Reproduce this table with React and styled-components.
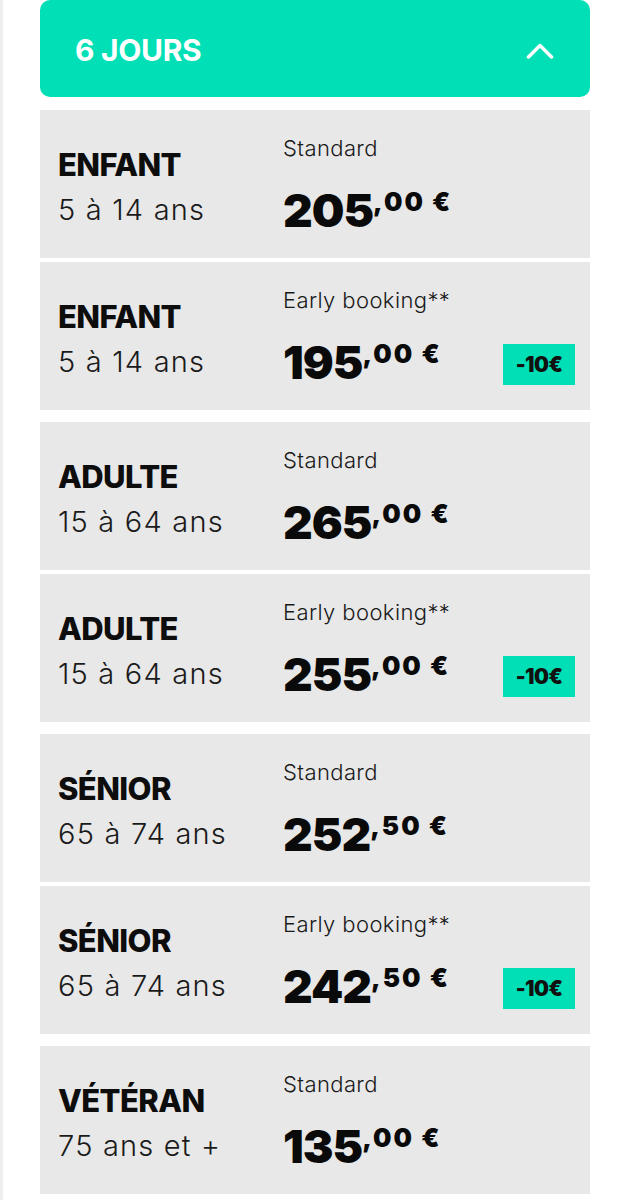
import React from "react";
import styled, { createGlobalStyle } from "styled-components";

const Global = createGlobalStyle`
  html, body { margin: 0; padding: 0; background: #ffffff; }
  body { font-family: Inter, "Liberation Sans", sans-serif; color: #111; }
`;

const Page = styled.div`
  min-height: 1200px;
  box-sizing: border-box;
  border-left: 3px solid #eeeeee;
  padding: 0 41px 6px 37px;
  border-bottom: 6px solid #f2f3f5;
  display: flex;
  flex-direction: column;
`;

const Header = styled.div`
  height: 97px;
  background: #00dfb5;
  border-radius: 10px;
  display: flex;
  align-items: center;
  justify-content: space-between;
  padding: 3px 36px 0 35px;
  box-sizing: border-box;
  margin-bottom: 13px;
`;

const Title = styled.h2`
  margin: 0;
  color: #ffffff;
  font-size: 30px;
  font-weight: 700;
  letter-spacing: -0.3px;
`;

const Chevron = styled.svg`
  width: 28px;
  height: 17px;
  display: block;
`;

const Group = styled.div`
  display: flex;
  flex-direction: column;
  gap: 4px;
  margin-bottom: 12px;
`;

const Card = styled.div`
  height: 148px;
  background: #e8e8e8;
  display: flex;
  box-sizing: border-box;
  padding: 0 15px 0 18px;
`;

const Who = styled.div`
  width: 225px;
  padding-top: 37px;
  display: flex;
  flex-direction: column;
  gap: 10px;
`;

const Name = styled.div`
  font-size: 31px;
  line-height: 36px;
  font-weight: 800;
  letter-spacing: -0.6px;
  color: #0d0d0d;
`;

const Age = styled.div`
  font-size: 29px;
  line-height: 34px;
  font-weight: 300;
  letter-spacing: 1.2px;
  color: #1a1a1a;
`;

const Offer = styled.div`
  flex: 1;
  padding-top: 24px;
  display: flex;
  flex-direction: column;
  gap: 23px;
`;

const Label = styled.div`
  font-size: 22px;
  line-height: 28px;
  font-weight: 300;
  letter-spacing: 0.4px;
  color: #1a1a1a;
`;

const PriceRow = styled.div`
  display: flex;
  align-items: flex-start;
  justify-content: space-between;
`;

const Price = styled.div`
  display: flex;
  align-items: flex-start;
  font-weight: 900;
  color: #0a0a0a;
`;

const Whole = styled.span`
  font-size: 46px;
  line-height: 50px;
  letter-spacing: -1px;
`;

const Cents = styled.span`
  font-size: 26px;
  line-height: 26px;
  margin-top: 4px;
  letter-spacing: 2px;
  white-space: pre;
`;

const Badge = styled.div`
  margin-top: 7px;
  width: 72px;
  height: 41px;
  background: #00dfb5;
  display: flex;
  align-items: center;
  justify-content: center;
  font-size: 21px;
  font-weight: 900;
  letter-spacing: -0.6px;
  color: #111;
`;

const rows = [
  [
    { name: "ENFANT", age: "5 à 14 ans", label: "Standard", whole: "205", cents: "00" },
    { name: "ENFANT", age: "5 à 14 ans", label: "Early booking**", whole: "195", cents: "00", badge: "-10€" },
  ],
  [
    { name: "ADULTE", age: "15 à 64 ans", label: "Standard", whole: "265", cents: "00" },
    { name: "ADULTE", age: "15 à 64 ans", label: "Early booking**", whole: "255", cents: "00", badge: "-10€" },
  ],
  [
    { name: "SÉNIOR", age: "65 à 74 ans", label: "Standard", whole: "252", cents: "50" },
    { name: "SÉNIOR", age: "65 à 74 ans", label: "Early booking**", whole: "242", cents: "50", badge: "-10€" },
  ],
  [
    { name: "VÉTÉRAN", age: "75 ans et +", label: "Standard", whole: "135", cents: "00" },
  ],
];

function PriceCard({ item }) {
  return (
    <Card>
      <Who>
        <Name>{item.name}</Name>
        <Age>{item.age}</Age>
      </Who>
      <Offer>
        <Label>{item.label}</Label>
        <PriceRow>
          <Price>
            <Whole>{item.whole}</Whole>
            <Cents>{`,${item.cents} €`}</Cents>
          </Price>
          {item.badge && <Badge>{item.badge}</Badge>}
        </PriceRow>
      </Offer>
    </Card>
  );
}

export default function App() {
  return (
    <>
      <Global />
      <Page>
        <Header>
          <Title>6 JOURS</Title>
          <Chevron viewBox="0 0 28 17" fill="none">
            <polyline points="2.5,15 14,3.5 25.5,15" stroke="#fff" strokeWidth="3.5" strokeLinecap="round" strokeLinejoin="round" />
          </Chevron>
        </Header>
        {rows.map((group, i) => (
          <Group key={i}>
            {group.map((item, j) => (
              <PriceCard key={j} item={item} />
            ))}
          </Group>
        ))}
      </Page>
    </>
  );
}
